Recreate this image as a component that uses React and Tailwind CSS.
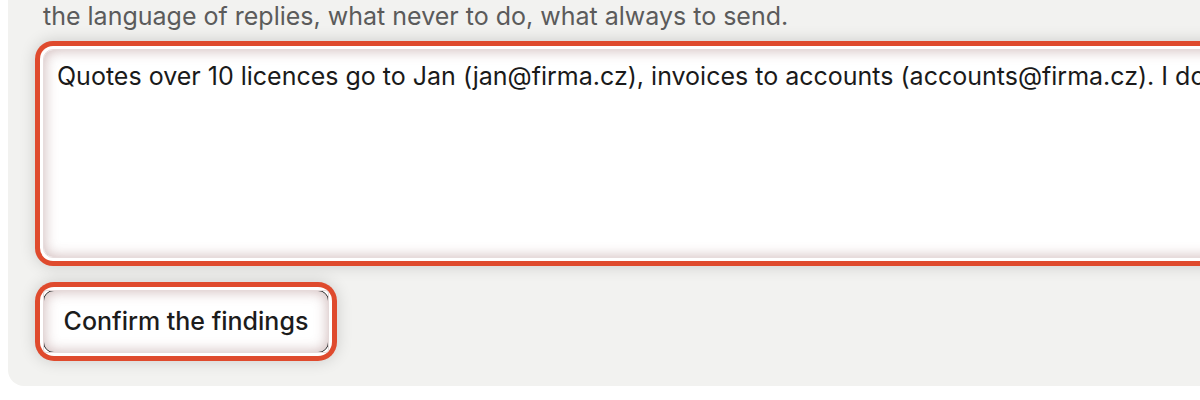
const ring =
  "shadow-[0_0_0_3px_#ffffff,0_0_0_8px_#df4a2d,0_0_16px_8px_rgba(0,0,0,0.16),inset_0_0_14px_rgba(130,70,70,0.4)]";

export default function App() {
  return (
    <div className="w-[1200px] h-[400px] overflow-hidden bg-white font-['Inter',sans-serif]">
      <div className="ml-2 w-[2800px] bg-[#f2f2f0] rounded-bl-2xl pl-[35px] pt-0 pb-[33px]">
        <p className="text-[25px] leading-[32px] text-[#5b5b5b]">
          the language of replies, what never to do, what always to send.
        </p>

        <textarea
          className={`block mt-[17px] w-[2700px] h-[209px] resize-none rounded-[10px] border border-[#e7dcdc] bg-white pt-[10px] px-[13px] text-[25px] leading-[32px] text-[#1a1a1a] outline-none ${ring}`}
          defaultValue="Quotes over 10 licences go to Jan (jan@firma.cz), invoices to accounts (accounts@firma.cz). I don't send discounts without approval."
        />

        <button
          className={`relative mt-[32px] w-[286px] h-[63px] rounded-[11px] border border-[#2a2a2a] bg-white text-[25px] font-medium text-[#1c1c1c] ${ring}`}
        >
          <span className="pointer-events-none absolute inset-[-1px] rounded-[4px] border border-x-[#e4d8d8] border-y-[#e6dada]" />
          Confirm the findings
        </button>
      </div>
    </div>
  );
}
